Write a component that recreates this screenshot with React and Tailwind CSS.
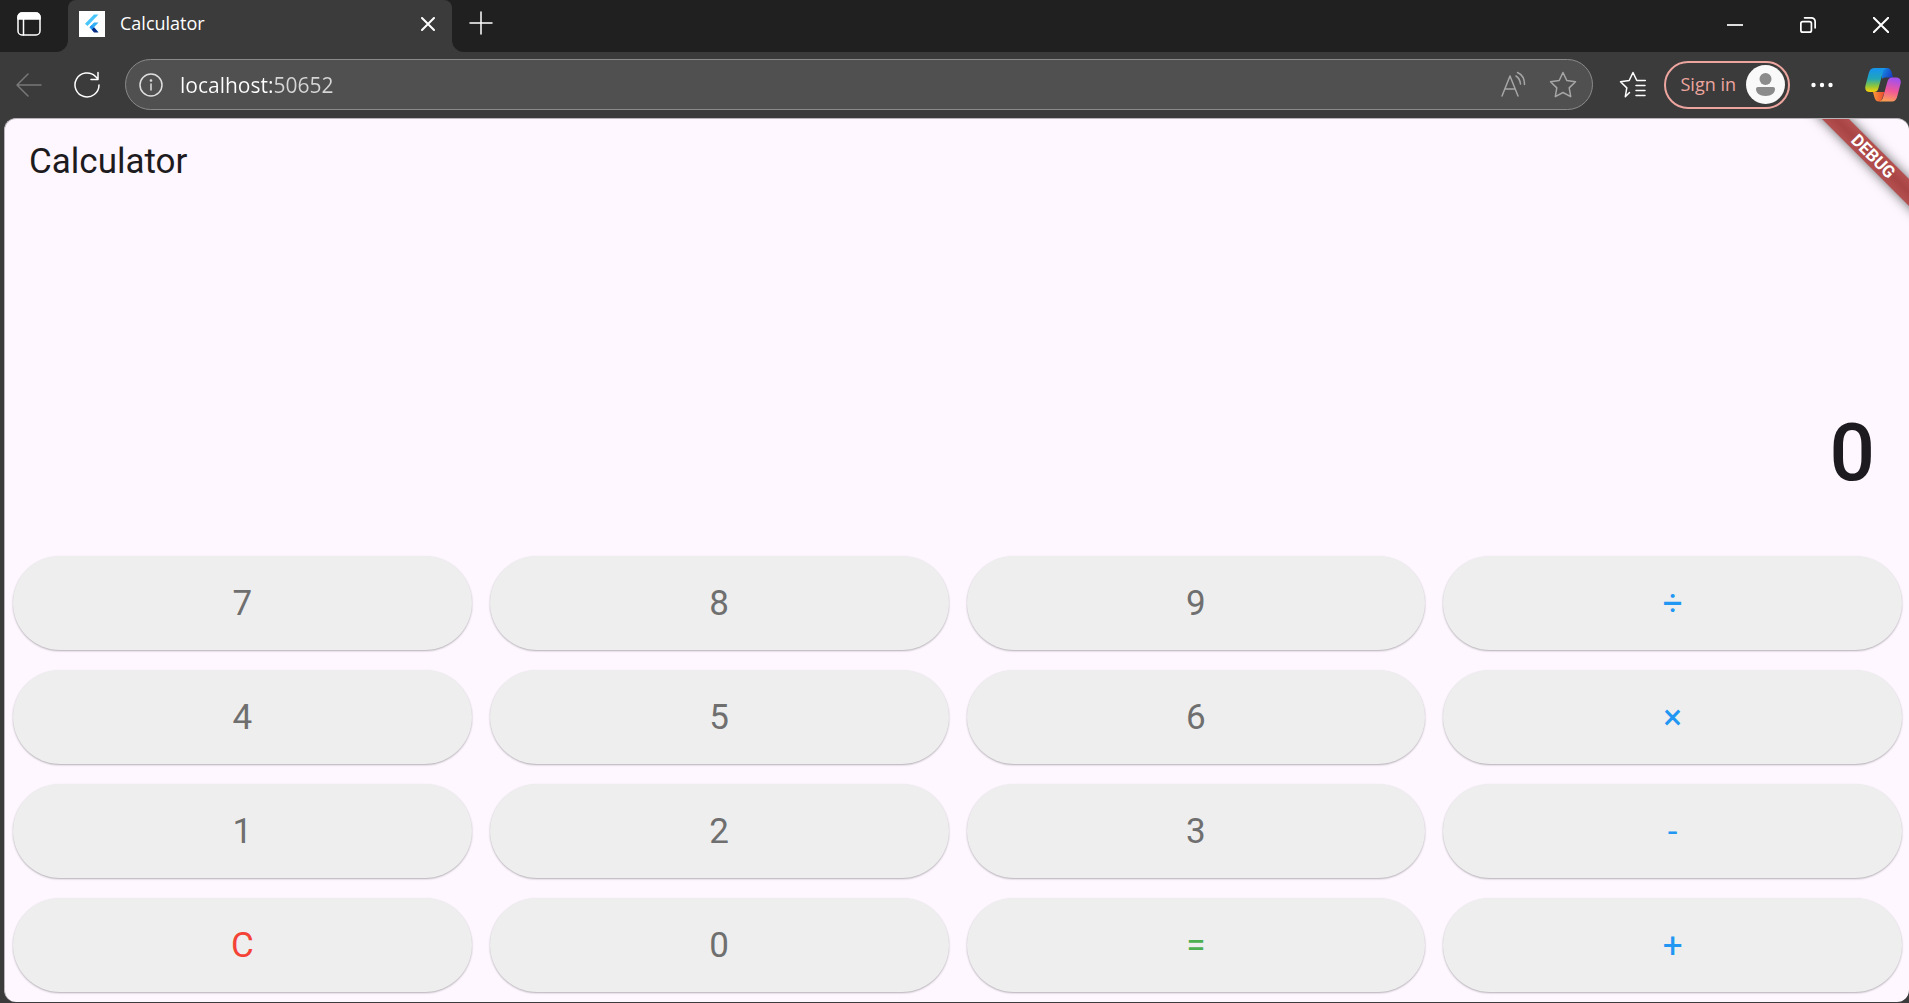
import { useState } from "react";

const KEYS = ["7", "8", "9", "÷", "4", "5", "6", "×", "1", "2", "3", "-", "C", "0", "=", "+"];

const KEY_COLORS = {
  "÷": "text-[#2196f3]",
  "×": "text-[#2196f3]",
  "-": "text-[#2196f3]",
  "+": "text-[#2196f3]",
  C: "text-[#f44336]",
  "=": "text-[#4caf50]",
};

function compute(a, op, b) {
  if (op === "+") return a + b;
  if (op === "-") return a - b;
  if (op === "×") return a * b;
  return a / b;
}

function Icon({ size = "size-7", children, ...rest }) {
  return (
    <svg
      viewBox="0 0 28 28"
      className={`${size} shrink-0`}
      fill="none"
      stroke="currentColor"
      strokeWidth="1.5"
      strokeLinecap="round"
      strokeLinejoin="round"
      aria-hidden="true"
      {...rest}
    >
      {children}
    </svg>
  );
}

function FlutterLogo() {
  return (
    <svg viewBox="0 0 26 26" className="size-[26px] shrink-0" aria-hidden="true">
      <rect width="26" height="26" fill="#fff" />
      <path d="M15 3.5h4.5L8.5 15 6 12.7z" fill="#47c5fb" />
      <path d="M15 11.5h4.5L15 16.300l4.500 4.700H15L10.500 16.300z" fill="#35b0f5" />
      <path d="M12.700 18.600l2.300-2.300 4.500 5.200H15z" fill="#0a2a83" />
      <path d="M10.500 16.300l2.200-2.200 2.300 2.200-2.300 2.300z" fill="#2196f3" />
    </svg>
  );
}

function CopilotLogo() {
  return (
    <svg viewBox="0 0 36 34" className="h-[34px] w-9 shrink-0" aria-hidden="true">
      <defs>
        <linearGradient id="cpLeft" x1="0" y1="0" x2="0" y2="1">
          <stop offset="0.1" stopColor="#1796e8" />
          <stop offset="0.45" stopColor="#22a6b8" />
          <stop offset="0.75" stopColor="#8cc63c" />
          <stop offset="1" stopColor="#fdd008" />
        </linearGradient>
        <linearGradient id="cpTop" x1="0" y1="0" x2="1" y2="0.5">
          <stop offset="0" stopColor="#1390e6" />
          <stop offset="1" stopColor="#1b3fc4" />
        </linearGradient>
        <linearGradient id="cpRight" x1="0.4" y1="0" x2="0.2" y2="1">
          <stop offset="0" stopColor="#a350ee" />
          <stop offset="0.5" stopColor="#f0579a" />
          <stop offset="1" stopColor="#fda450" />
        </linearGradient>
        <linearGradient id="cpBottom" x1="0" y1="0" x2="1" y2="0">
          <stop offset="0" stopColor="#fb9a3a" />
          <stop offset="1" stopColor="#e8452f" />
        </linearGradient>
      </defs>
      <path d="M17 0h5c3 0 4 2 4.800 5l1.200 4.500h-6c-3 0-4 0-5 1.500z" fill="url(#cpTop)" />
      <path d="M9 24h10.500l-3.500 9.500h-2c-3 0-4-2-4.800-5L8 24z" fill="url(#cpBottom)" />
      <path d="M9 0h12.500c-2 .500-3 2-3.800 5l-4.200 15c-.900 3-2 4-5 4H5c-4 0-5.500-2.500-4.500-6.500L3.500 6C4.500 2 6 0 9 0z" fill="url(#cpLeft)" />
      <path d="M27 33.500H14.500c2-.500 3-2 3.800-5l4-14.500c.9-3 2-4.500 5-4.500H31c4 0 5.500 2.500 4.500 6.500L32.500 27.500c-1 4-2.500 6-5.500 6z" fill="url(#cpRight)" />
    </svg>
  );
}

const STAR = "M14 1.500l3.800 8 8.700 1.200-6.300 6.200 1.500 8.800L14 21.500l-7.700 4.200 1.500-8.800-6.300-6.200 8.700-1.200z";

function TabStrip() {
  return (
    <div className="flex h-13 text-white">
      <div className="flex w-17 items-center rounded-br-xl bg-[#202020] pb-1 pl-[15px]">
        <button aria-label="Tab actions">
          <Icon>
            <rect x="3" y="3" width="22" height="22" rx="4" />
            <path d="M3 9V7a4 4 0 0 1 4-4h14a4 4 0 0 1 4 4v2z" fill="currentColor" />
            <path d="M8.500 9v16" />
          </Icon>
        </button>
      </div>
      <div className="w-96 bg-[#202020]">
        <div className="flex h-full items-center rounded-t-lg bg-[#3b3b3b] pr-3.5 pb-1 pl-[11px]">
          <FlutterLogo />
          <span className="ml-[15px] flex-1 pb-0.5 text-[18px] leading-6">Calculator</span>
          <button aria-label="Close tab" className="flex size-5 items-center justify-center">
            <Icon size="size-[14px]" strokeWidth="4">
              <path d="M2 2l24 24M26 2L2 26" />
            </Icon>
          </button>
        </div>
      </div>
      <div className="flex flex-1 items-center justify-between rounded-bl-xl bg-[#202020] pr-5 pb-0.5 pl-[15px]">
        <button aria-label="New tab" className="mb-1">
          <Icon>
            <path d="M14 3v22M3 14h22" />
          </Icon>
        </button>
        <div className="flex items-center gap-[57px]">
          <button aria-label="Minimize">
            <Icon size="size-4" strokeWidth="3">
              <path d="M0 14h28" strokeLinecap="butt" />
            </Icon>
          </button>
          <button aria-label="Restore">
            <Icon size="size-4" strokeWidth="3">
              <rect x="1.500" y="8" width="18.500" height="18.500" rx="3.500" />
              <path d="M8 1.500h12a6.500 6.500 0 0 1 6.500 6.500v11" />
            </Icon>
          </button>
          <button aria-label="Close window">
            <Icon size="size-4" strokeWidth="3.500">
              <path d="M1 1l26 26M27 1L1 27" />
            </Icon>
          </button>
        </div>
      </div>
    </div>
  );
}

function Toolbar() {
  return (
    <div className="flex h-[66px] items-center pr-2 pb-px pl-[15px] text-white">
      <button aria-label="Back" className="text-[#787878]">
        <Icon>
          <path d="M26 14H2M13 3L2 14l11 11" />
        </Icon>
      </button>
      <button aria-label="Refresh" className="ml-[30px]">
        <Icon>
          <path d="M26 14a12 12 0 1 1-3.500-8.500L25 8M25 1.500V8.500h-7" />
        </Icon>
      </button>
      <div className="ml-6 flex h-[51px] flex-1 items-center rounded-full border border-[#8a8a8a] bg-[#505050] pr-[15px] pl-[11px]">
        <button aria-label="Site information" className="text-[#dedede]">
          <Icon>
            <circle cx="14" cy="14" r="11" />
            <path d="M14 13v6" />
            <circle cx="14" cy="9.500" r="0.600" fill="currentColor" />
          </Icon>
        </button>
        <input
          type="text"
          aria-label="Address"
          defaultValue="localhost:50652"
          className="ml-[15px] min-w-0 flex-1 bg-[linear-gradient(to_right,#ffffff_92px,#d6d6d6_92px)] bg-clip-text text-[21px] leading-7 text-transparent caret-white outline-none"
        />
        <div className="flex items-center gap-[22px] text-[#a6a6a6]">
          <button aria-label="Read aloud">
            <Icon>
              <path d="M3 25L11 5l8 20M6 18h10M17 5c2.500 1.500 4 4 4.500 8M18.500 1.500c4.500 2 7 6 7 12" />
            </Icon>
          </button>
          <button aria-label="Add to favorites">
            <Icon>
              <path d={STAR} />
            </Icon>
          </button>
        </div>
      </div>
      <button aria-label="Favorites" className="ml-[26px]">
        <Icon>
          <path d="M10.500 21.500L6.300 25.700l1.500-8.800-6.300-6.200 8.700-1.200 3.800-8 3.800 8h8.500M17 14.500h9M17 19.500h9M17 24.500h9" />
        </Icon>
      </button>
      <button className="ml-[17px] flex h-12 items-center gap-2.5 rounded-full border-2 border-[#eda59f] pr-[3px] pl-[15px] text-[18px] text-[#eda59f]">
        Sign in
        <svg viewBox="0 0 39 39" className="size-[39px]" aria-hidden="true">
          <circle cx="19.500" cy="19.500" r="19.500" fill="#f9f9f9" />
          <circle cx="19.500" cy="14" r="6" fill="#8b8b8b" />
          <path d="M12 22h15q2 0 2 2c0 4-3.500 7-9.500 7S10 28 10 24q0-2 2-2z" fill="#8b8b8b" />
        </svg>
      </button>
      <button aria-label="Settings and more" className="ml-[18px]">
        <Icon stroke="none" fill="currentColor">
          <circle cx="5.500" cy="14" r="2.200" />
          <circle cx="14" cy="14" r="2.200" />
          <circle cx="22.500" cy="14" r="2.200" />
        </Icon>
      </button>
      <button aria-label="Copilot" className="ml-[29px]">
        <CopilotLogo />
      </button>
    </div>
  );
}

function DebugBanner() {
  return (
    <div className="pointer-events-none absolute top-0 right-0 size-32 overflow-hidden">
      <div className="absolute top-7 -right-16 h-[19px] w-[200px] rotate-45 bg-linear-to-b from-[#b55050] via-[#a84444] to-[#b55050] text-center text-[17px] leading-[19px] font-bold text-white shadow-[0_0_12px_rgba(0,0,0,0.6)]">
        DEBUG
      </div>
    </div>
  );
}

export default function App() {
  const [display, setDisplay] = useState("0");
  const [pending, setPending] = useState(null);
  const [fresh, setFresh] = useState(true);

  function press(key) {
    if (key === "C") {
      setDisplay("0");
      setPending(null);
      setFresh(true);
    } else if (/\d/.test(key)) {
      setDisplay(fresh ? key : display + key);
      setFresh(false);
    } else {
      const value = pending ? compute(pending.value, pending.op, Number(display)) : Number(display);
      setDisplay(String(value));
      setPending(key === "=" ? null : { value, op: key });
      setFresh(true);
    }
  }

  return (
    <div className="flex min-h-screen flex-col bg-[#3b3b3b] font-['Open_Sans','Noto_Sans',sans-serif]">
      <TabStrip />
      <Toolbar />
      <main className="relative mb-px ml-1 flex flex-1 flex-col overflow-hidden rounded-xl border-t border-l border-[#b9b4b9] bg-[#fef7ff] font-[Roboto,sans-serif] text-[#1d1b20]">
        <h1 className="px-6 pt-[21px] text-[35px] leading-[44px]">Calculator</h1>
        <output className="flex flex-1 items-end justify-end px-[34px] pb-14 text-[80px] leading-[94px] font-medium">{display}</output>
        <div className="grid grid-cols-4 gap-x-[18px] gap-y-5 pr-[7px] pb-2.5 pl-2">
          {KEYS.map((key) => (
            <button
              key={key}
              onClick={() => press(key)}
              className={`h-[94px] rounded-full bg-[#eeeeee] pt-0.5 text-[35px] shadow-[0_1px_2px_rgba(0,0,0,0.300)] ${KEY_COLORS[key] ?? "text-[#6f6f6f]"}`}
            >
              {key}
            </button>
          ))}
        </div>
        <DebugBanner />
      </main>
    </div>
  );
}
